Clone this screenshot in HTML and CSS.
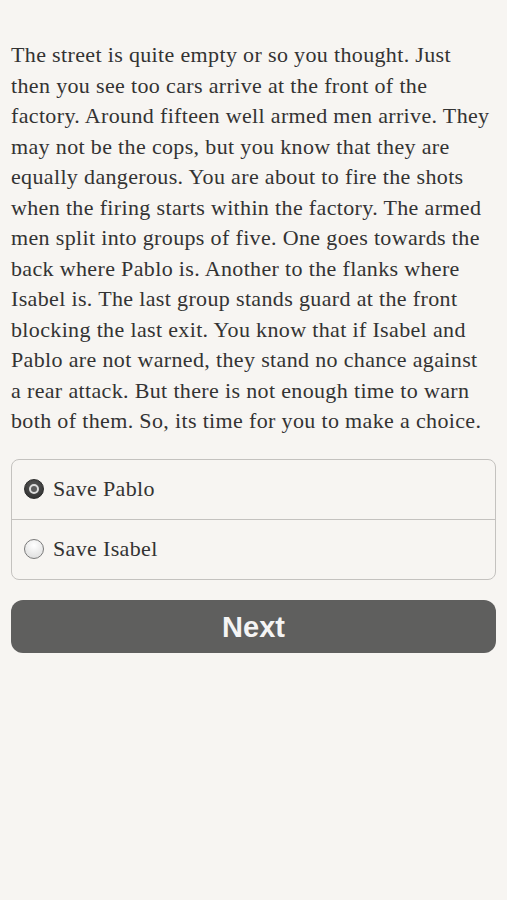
FILE: index.html
```html
<!DOCTYPE html>
<html lang="en">
<head>
    <meta charset="UTF-8">
    <meta name="viewport" content="width=device-width, initial-scale=1.0">
    <title>Story Choice</title>
    <link rel="stylesheet" href="styles.css">
</head>
<body>
    <div class="page">
        <p class="story">
            The street is quite empty or so you thought. Just<br>
            then you see too cars arrive at the front of the<br>
            factory. Around fifteen well armed men arrive. They<br>
            may not be the cops, but you know that they are<br>
            equally dangerous. You are about to fire the shots<br>
            when the firing starts within the factory. The armed<br>
            men split into groups of five. One goes towards the<br>
            back where Pablo is. Another to the flanks where<br>
            Isabel is. The last group stands guard at the front<br>
            blocking the last exit. You know that if Isabel and<br>
            Pablo are not warned, they stand no chance against<br>
            a rear attack. But there is not enough time to warn<br>
            both of them. So, its time for you to make a choice.
        </p>

        <div class="choices">
            <label class="choice">
                <input type="radio" name="choice" value="pablo" checked>
                <span class="radio"></span>
                <span class="choice-text">Save Pablo</span>
            </label>
            <label class="choice">
                <input type="radio" name="choice" value="isabel">
                <span class="radio"></span>
                <span class="choice-text">Save Isabel</span>
            </label>
        </div>

        <button class="next-btn">Next</button>
    </div>
</body>
</html>
```

FILE: styles.css
```css
body {
    margin: 0;
    padding: 0;
    background: #f7f5f2;
    font-family: "Liberation Serif", "DejaVu Serif", serif;
    color: #333;
}
.page {
    padding: 40px 11px 0 11px;
}
.story {
    margin: 0;
    font-size: 22px;
    letter-spacing: 0.35px;
    line-height: 30.5px;
    white-space: nowrap;
}
.choices {
    margin-top: 22px;
    border: 1px solid #c4c2bf;
    border-radius: 8px;
    overflow: hidden;
}
.choice {
    display: flex;
    align-items: center;
    height: 59px;
    padding-left: 12px;
    font-size: 22px;
    letter-spacing: 0.35px;
    color: #333;
    cursor: pointer;
}
.choice + .choice {
    border-top: 1px solid #c4c2bf;
}
.choice input {
    display: none;
}
.radio {
    width: 20px;
    height: 20px;
    border-radius: 50%;
    border: 1px solid #7a7a7a;
    background: radial-gradient(circle at 50% 30%, #ffffff, #d9d9d9);
    box-sizing: border-box;
    margin-right: 9px;
    position: relative;
}
.choice input:checked + .radio {
    border-color: #2a2a2a;
    background: radial-gradient(circle at 50% 35%, #5a5a5a, #2a2a2a);
}
.choice input:checked + .radio::after {
    content: "";
    position: absolute;
    left: 4px;
    top: 4px;
    width: 10px;
    height: 10px;
    box-sizing: border-box;
    border-radius: 50%;
    border: 2px solid #dcdcdc;
    background: #5c5c5c;
}
.next-btn {
    display: block;
    width: 100%;
    margin-top: 20px;
    height: 53px;
    border: none;
    border-radius: 12px;
    background: #5f5f5e;
    color: #f4f4f4;
    font-family: "Liberation Sans", Arial, sans-serif;
    font-weight: bold;
    font-size: 29px;
    padding-top: 3px;
    cursor: pointer;
}
```
